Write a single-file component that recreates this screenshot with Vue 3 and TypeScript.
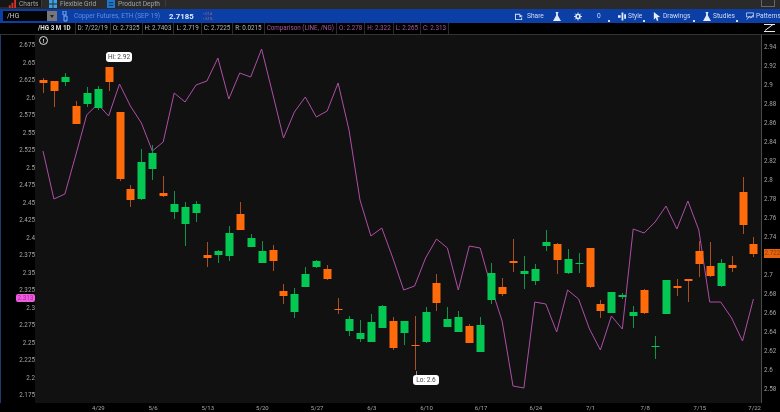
<script setup lang="ts">
// Copper futures chart. Candle rows are [wickTop, bodyTop, bodyBottom, wickBottom, up]
// in page pixels, read straight off the chart.
type Candle = [number, number, number, number, number];

const STEP = 10.93;
const xAt = (i: number) => Math.round(43 + STEP * i) + 0.5;

const rows: Candle[] = [
	[78, 80, 83, 93, 0], [81, 81, 91, 107, 0], [73, 77, 82, 86, 1], [101, 106, 124, 124, 0],
	[87, 93, 104, 107, 1], [86, 89, 108, 110, 1], [67, 67, 82, 91, 0], [112, 112, 179, 181, 0],
	[185, 189, 200, 207, 0], [149, 162, 199, 200, 1], [145, 153, 169, 180, 1], [176, 193, 196, 197, 0],
	[191, 204, 212, 219, 1], [202, 207, 224, 246, 1], [201, 204, 213, 222, 1], [242, 255, 258, 267, 0],
	[250, 251, 255, 263, 1], [226, 233, 256, 261, 1], [202, 214, 230, 230, 0], [234, 238, 247, 247, 1],
	[241, 251, 263, 263, 1], [245, 250, 261, 271, 0], [284, 291, 296, 304, 0], [288, 294, 312, 318, 1],
	[267, 274, 287, 287, 1], [260, 261, 267, 268, 1], [265, 269, 279, 280, 0], [298, 309, 310, 314, 0],
	[316, 319, 331, 336, 1], [320, 333, 339, 342, 1], [314, 322, 342, 342, 1], [305, 306, 328, 328, 1],
	[317, 321, 348, 350, 0], [321, 321, 333, 345, 1], [316, 345, 346, 370, 0], [307, 312, 342, 343, 1],
	[274, 283, 303, 311, 0], [307, 319, 327, 327, 1], [311, 317, 332, 332, 1], [324, 326, 343, 343, 0],
	[317, 325, 352, 352, 1], [263, 273, 300, 304, 1], [278, 287, 294, 296, 0], [239, 261, 263, 272, 0],
	[256, 271, 274, 289, 1], [264, 269, 281, 285, 1], [230, 242, 246, 251, 1], [243, 244, 260, 274, 0],
	[249, 259, 273, 274, 1], [253, 263, 264, 273, 1], [248, 248, 287, 288, 0], [300, 304, 311, 318, 0],
	[292, 292, 313, 313, 1], [293, 295, 297, 299, 1], [306, 312, 316, 328, 1], [289, 290, 313, 314, 0],
	[336, 346, 347, 359, 1], [280, 280, 314, 314, 1], [279, 286, 288, 296, 0], [279, 279, 281, 302, 0],
	[241, 251, 264, 277, 0], [242, 266, 276, 277, 0], [259, 263, 286, 287, 1], [256, 265, 268, 272, 0],
	[177, 192, 225, 234, 0], [237, 244, 254, 257, 0],
];

const candles = rows.map(([hi, top, bottom, lo, up], i) => ({
	x: xAt(i),
	hi,
	lo,
	top,
	height: Math.max(bottom - top, 1),
	up: up === 1,
}));

const lineY = [
	151, 199, 194, 155, 115, 104, 116, 84, 106, 123, 151, 142, 93, 102, 85, 81, 58, 99, 73, 77, 49, 93,
	138, 112, 97, 117, 111, 83, 130, 200, 236, 228, 258, 290, 286, 258, 239, 248, 290, 246, 248, 287,
	321, 386, 388, 302, 304, 332, 290, 299, 329, 350, 316, 329, 229, 233, 222, 206, 229, 201, 230, 302,
	302, 318, 341, 299,
];
const linePoints = lineY.map((y, i) => `${(43 + STEP * i).toFixed(1)},${y}`).join(" ");

const leftTicks = Array.from({ length: 21 }, (_, i) => String(Number((2.675 - i * 0.025).toFixed(3))));
const rightTicks = Array.from({ length: 19 }, (_, i) => String(Number((2.94 - i * 0.02).toFixed(2))));
const dates = ["4/29", "5/6", "5/13", "5/20", "5/27", "6/3", "6/10", "6/17", "6/24", "7/1", "7/8", "7/15", "7/22"];

const priceCells = ["D: 7/22/19", "O: 2.7325", "H: 2.7403", "L: 2.719", "C: 2.7225", "R: 0.0215"];
const compareCells = ["Comparison (LINE, /NG)", "O: 2.278", "H: 2.322", "L: 2.265", "C: 2.313"];
</script>

<template>
	<div class="screen">
		<nav class="tabs">
			<div class="tab tab-active">
				<svg class="tab-icon" viewBox="0 0 9 9"><path d="M1 9V6h2v3zM4 9V3h2v6zM7 9V0h2v9z" fill="#d8322a" /></svg>
				<span>Charts</span>
			</div>
			<div class="tab tab-grid">
				<svg class="tab-icon" viewBox="0 0 9 9"><path d="M0 0h4v4H0zM5 0h4v4H5zM0 5h4v4H0zM5 5h4v4H5z" fill="#3f9fe0" /></svg>
				<span>Flexible Grid</span>
			</div>
			<div class="tab tab-depth">
				<svg class="tab-icon" viewBox="0 0 9 9"><path d="M0 0h9v9H0z" fill="#1f78c8" /><path d="M2 3h5M2 6h5" stroke="#0b2c55" /></svg>
				<span>Product Depth</span>
			</div>
			<div class="window-box"></div>
		</nav>

		<header class="toolbar">
			<div class="symbol">
				<span>/HG</span>
				<i class="symbol-drop"></i>
			</div>
			<svg class="link-icon" viewBox="0 0 6 11"><path d="M1 0h3v4H1zM2 5h3v5H2z" fill="none" stroke="#7fb0ea" /></svg>
			<span class="desc">Copper Futures, ETH (SEP 19)</span>
			<span class="last">2.7185</span>
			<span class="change">-.014<br />-.51%</span>

			<div class="actions">
				<span class="action action-share">
					<svg viewBox="0 0 9 8"><path d="M0 1h6v1H1v5h6V5h1v3H0zM5 2l4 1.500L5 5z" fill="#dce8fa" /></svg>
					Share
				</span>
				<span class="action action-flask">
					<svg viewBox="0 0 9 10"><path d="M3 0h3v1H5.500v3L9 10H0l3.500-6V1H3z" fill="#e4ecfa" /></svg>
				</span>
				<span class="action action-gear">
					<svg viewBox="0 0 9 9"><circle cx="4.500" cy="4.500" r="2.200" fill="none" stroke="#e4ecfa" stroke-width="1.600" /><path d="M4.500 0v9M0 4.500h9M1.300 1.300l6.400 6.400M7.700 1.300L1.300 7.700" stroke="#e4ecfa" stroke-width="1" /><circle cx="4.500" cy="4.500" r="1.300" fill="#0b3fa6" /></svg>
				</span>
				<span class="action action-zero">0<i class="corner"></i></span>
				<span class="action action-style">
					<svg viewBox="0 0 9 9"><path d="M0 3h3v3H0zM4 0h2v9H4zM7 2h2v5H7z" fill="#e4ecfa" /></svg>
					Style<i class="corner"></i>
				</span>
				<span class="action action-draw">
					<svg viewBox="0 0 7 10"><path d="M0 0l7 5.500-3 .3L5 9.500l-1.500.5L2 6.500 0 8.500z" fill="#e4ecfa" /></svg>
					Drawings<i class="corner"></i>
				</span>
				<span class="action action-studies">
					<svg viewBox="0 0 9 10"><path d="M3 0h3v1H5.500v3L9 10H0l3.500-6V1H3z" fill="#e4ecfa" /></svg>
					Studies<i class="corner"></i>
				</span>
				<span class="action action-patterns">
					<svg viewBox="0 0 10 10"><path d="M.5.500h9v5h-9zM1 9l3-4 2 2 3-4" fill="none" stroke="#e4ecfa" stroke-width=".9" /></svg>
					Patterns
				</span>
			</div>
		</header>

		<div class="legend">
			<span class="cell cell-title">/HG 3 M 1D</span>
			<span v-for="c in priceCells" :key="c" class="cell">{{ c }}</span>
			<span v-for="c in compareCells" :key="c" class="cell cell-compare">{{ c }}</span>
			<svg class="scale-icon" viewBox="0 0 11 8"><path d="M0 .500h11M0 7.500h11M1 6.500l8-6" fill="none" stroke="#e8e8e8" /></svg>
		</div>

		<main class="chart">
			<div class="axis-left">
				<span v-for="t in leftTicks" :key="t">{{ t }}</span>
				<b class="tag tag-compare">2.313</b>
			</div>

			<div class="plot">
				<svg class="plot-svg" viewBox="35 35 726 368">
					<polyline :points="linePoints" fill="none" stroke="#ae4fa6" stroke-width="1" />
					<g v-for="c in candles" :key="c.x" :class="c.up ? 'up' : 'down'">
						<line class="wick" :x1="c.x" :x2="c.x" :y1="c.hi" :y2="c.lo" />
						<rect class="body" :x="c.x - 4" :y="c.top" width="8" :height="c.height" />
					</g>
				</svg>
				<span class="info">!</span>
				<span class="bubble bubble-hi">Hi: 2.92</span>
				<i class="bubble-tail"></i>
				<span class="bubble bubble-lo">Lo: 2.6</span>
			</div>

			<div class="axis-right">
				<span v-for="t in rightTicks" :key="t">{{ t }}</span>
				<b class="tag tag-last">2.722</b>
			</div>
		</main>

		<footer class="dates">
			<span v-for="d in dates" :key="d">{{ d }}</span>
		</footer>
	</div>
</template>

<style scoped>
.screen {
	display: flex;
	flex-direction: column;
	width: 780px;
	height: 412px;
	overflow: hidden;
	background: #000;
	font-family: Roboto, "Liberation Sans", sans-serif;
	font-size: 6.3px;
	color: #aaa;
	filter: blur(0.35px);
}

.tabs {
	position: relative;
	display: flex;
	flex: 0 0 9px;
	background: #2a2a2a;
	color: #a2a2a2;
	font-size: 6.6px;
	overflow: hidden;
	white-space: nowrap;
}

.tab {
	display: flex;
	flex: none;
	align-items: center;
	gap: 3px;
	box-sizing: border-box;
	height: 7px;
}

.tab-active {
	width: 41px;
	padding-left: 8px;
	background: #161616;
}

.tab-grid {
	width: 59px;
	padding-left: 7px;
	border-left: 1px solid #3a3a3a;
}

.tab-depth {
	width: 66px;
	padding-left: 7px;
	border-right: 1px solid #3a3a3a;
}

.tab-icon {
	width: 8px;
	height: 8px;
	flex: none;
}

.window-box {
	position: absolute;
	top: -2px;
	right: 5px;
	width: 12px;
	height: 7px;
	border: 1px solid #666;
}

.toolbar {
	display: flex;
	flex: 0 0 14px;
	align-items: center;
	background: #0b3fa6;
	padding-left: 3px;
	white-space: nowrap;
}

.symbol {
	display: flex;
	flex: none;
	align-items: center;
	justify-content: space-between;
	width: 54px;
	height: 10px;
	padding-left: 4px;
	box-sizing: border-box;
	background: #050508;
	color: #c8c8c8;
	font-size: 6.8px;
}

.symbol-drop {
	display: flex;
	align-items: center;
	justify-content: center;
	width: 10px;
	height: 10px;
	background: #777;
}

.symbol-drop::after {
	content: "";
	border-top: 3px solid #222;
	border-left: 2.500px solid transparent;
	border-right: 2.500px solid transparent;
}

.link-icon {
	flex: none;
	width: 6px;
	height: 11px;
	margin-left: 5px;
}

.desc {
	flex: none;
	width: 95px;
	margin-left: 6px;
	color: #5f8fdc;
	font-size: 6.500px;
}

.last {
	flex: none;
	width: 34px;
	color: #e4ecfa;
	font-size: 7.800px;
	font-weight: 700;
}

.change {
	flex: none;
	width: 18px;
	color: #a8688f;
	font-size: 4px;
	line-height: 5px;
}

.actions {
	display: flex;
	flex: 1;
	align-items: center;
	height: 14px;
	padding-left: 294px;
	color: #cfdcf3;
	font-size: 6.600px;
}

.action {
	position: relative;
	display: flex;
	flex: none;
	align-items: center;
	gap: 2px;
	box-sizing: border-box;
	height: 14px;
}

.action svg {
	width: 8px;
	height: 9px;
	flex: none;
}

.corner {
	position: absolute;
	right: 8px;
	bottom: 1px;
	width: 2px;
	height: 2px;
	background: #cfdcf3;
}

.action-share {
	width: 38px;
	gap: 4px;
}

.action-flask {
	width: 21px;
}

.action-gear {
	width: 23px;
}

.action-zero {
	width: 21px;
}

.action-style {
	width: 35px;
}

.action-draw {
	width: 50px;
}

.action-studies {
	width: 43px;
}

.legend {
	position: relative;
	display: flex;
	flex: 0 0 12px;
	box-sizing: border-box;
	align-items: center;
	padding-left: 37px;
	border-bottom: 1px solid #333;
	background: #000;
}

.cell {
	flex: none;
	padding: 0 2px;
	border-right: 1px solid #2c2c2c;
	line-height: 11px;
	white-space: nowrap;
	color: #b4b4b4;
}

.cell-title {
	padding: 0 4px 0 1px;
	color: #e2e2e2;
	font-weight: 700;
}

.cell-compare {
	color: #a9589f;
}

.scale-icon {
	position: absolute;
	top: 1px;
	right: 5px;
	width: 11px;
	height: 8px;
}

.chart {
	display: flex;
	flex: 1;
	min-height: 0;
}

.axis-left {
	position: relative;
	display: flex;
	flex: 0 0 35px;
	flex-direction: column;
	align-items: flex-end;
	box-sizing: border-box;
	padding-top: 2.250px;
	border-left: 1px solid #1e3a70;
	color: #a6a6a6;
}

.axis-left span {
	height: 17.500px;
	line-height: 17.500px;
}

.axis-right {
	position: relative;
	display: flex;
	flex: 0 0 19px;
	flex-direction: column;
	box-sizing: border-box;
	padding: 2.500px 0 0 2px;
	border-left: 1px solid #4a4a4a;
	color: #a6a6a6;
}

.axis-right span {
	height: 19.050px;
	line-height: 19.050px;
}

.tag {
	position: absolute;
	font-weight: 400;
	text-align: center;
}

.tag-compare {
	top: 259px;
	left: 15px;
	width: 19px;
	height: 8px;
	line-height: 8px;
	border-radius: 2px;
	background: #f05be0;
	color: #a8289c;
}

.tag-last {
	top: 214px;
	left: 2px;
	width: 17px;
	height: 9px;
	line-height: 9px;
	background: #e8640f;
	color: #8f3c06;
}

.plot {
	position: relative;
	flex: 1;
	background: #111;
}

.plot-svg {
	display: block;
	width: 100%;
	height: 100%;
}

.wick {
	stroke-width: 1;
}

.up .wick {
	stroke: #12934a;
}

.down .wick {
	stroke: #a8501f;
}

.up .body {
	fill: #04c853;
}

.down .body {
	fill: #ff6a0a;
}

.info {
	position: absolute;
	top: 1px;
	left: 4px;
	width: 7px;
	height: 7px;
	border: 1px solid #ddd;
	border-radius: 50%;
	color: #ddd;
	font-size: 6px;
	font-weight: 700;
	line-height: 7px;
	text-align: center;
}

.bubble {
	position: absolute;
	box-sizing: border-box;
	width: 26px;
	height: 10px;
	background: #fff;
	border-radius: 3px;
	color: #444;
	font-size: 6.500px;
	line-height: 10px;
	text-align: center;
	white-space: nowrap;
}

.bubble-hi {
	top: 17px;
	left: 71px;
}

.bubble-lo {
	top: 340px;
	left: 378px;
}

.bubble-tail {
	position: absolute;
	top: 336px;
	left: 381px;
	width: 1px;
	height: 4px;
	background: #888;
}

.dates {
	display: grid;
	flex: 0 0 9px;
	grid-template-columns: repeat(13, 54.700px);
	padding-left: 71px;
	color: #a6a6a6;
	font-size: 6px;
	line-height: 9px;
}

.dates span {
	text-align: center;
}
</style>

<style>
html,
body {
	margin: 0;
	background: #000;
	overflow: hidden;
}
</style>
